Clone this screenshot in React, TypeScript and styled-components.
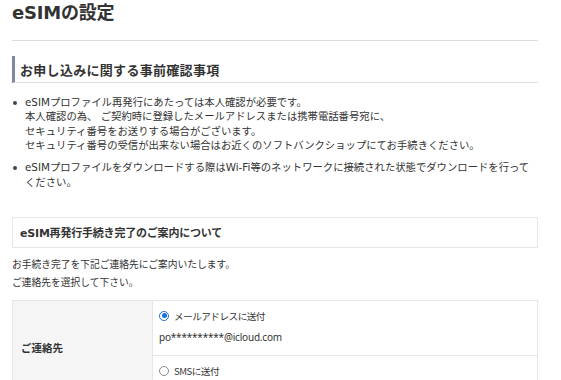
import React from "react";
import styled, { createGlobalStyle } from "styled-components";

const GlobalStyle = createGlobalStyle`
  body {
    margin: 0;
    background: #fff;
    color: #333;
    font-family: "DejaVu Sans", "Noto Sans CJK JP", sans-serif;
  }
`;

const Page = styled.div`
  width: 526px;
  padding: 0 12px;
`;

const Title = styled.h1`
  margin: 0;
  font-size: 18px;
  line-height: 26px;
  font-weight: bold;
  color: #333;
  letter-spacing: -0.2px;
`;

const Rule = styled.hr`
  margin: 14px 0 0;
  border: 0;
  border-top: 1px solid #dcdcdc;
`;

const SectionHead = styled.h2`
  margin: 15px 0 0;
  height: 26px;
  display: flex;
  align-items: center;
  padding-left: 5px;
  border-left: 3px solid #7f8a9e;
  border-bottom: 1px solid #dedede;
  font-family: "Noto Sans CJK JP", sans-serif;
  font-size: 13px;
  font-weight: bold;
  letter-spacing: 0.3px;
`;

const Bullets = styled.ul`
  margin: 12px 0 0;
  padding: 0;
  list-style: none;
`;

const Bullet = styled.li`
  position: relative;
  padding-left: 13px;
  font-size: 10.35px;
  line-height: 14.4px;
  & + & {
    margin-top: 7.5px;
  }
  &::before {
    content: "";
    position: absolute;
    left: 1px;
    top: 5.5px;
    width: 4px;
    height: 4px;
    border-radius: 50%;
    background: #444;
  }
`;

const InfoBox = styled.div`
  margin-top: 28px;
  height: 29px;
  display: flex;
  align-items: center;
  padding-left: 7px;
  border: 1px solid #e6e6e6;
  font-size: 11px;
  font-weight: bold;
  letter-spacing: -0.2px;
`;

const Note = styled.p`
  margin: 8px 0 0;
  font-size: 9.75px;
  line-height: 18px;
`;

const Table = styled.div`
  margin-top: 8px;
  display: grid;
  grid-template-columns: 140px 1fr;
  border: 1px solid #e6e6e6;
  border-bottom: 0;
`;

const LabelCell = styled.div`
  background: #f5f5f5;
  display: flex;
  align-items: center;
  padding-left: 8px;
  font-size: 10.5px;
  font-weight: bold;
  border-right: 1px solid #e6e6e6;
`;

const OptionCell = styled.div<{ $h: number }>`
  padding: 7px 6px 0;
  height: ${(p) => p.$h}px;
  box-sizing: border-box;
  font-family: "Noto Sans CJK JP", sans-serif;
  font-size: 9.6px;
  & + & {
    border-top: 1px solid #e6e6e6;
  }
`;

const OptionRow = styled.label`
  display: flex;
  align-items: center;
  gap: 5px;
  height: 16px;
  letter-spacing: -0.5px;
`;

const Radio = styled.span<{ $on?: boolean }>`
  width: 10px;
  height: 10px;
  border-radius: 50%;
  box-sizing: border-box;
  border: ${(p) => (p.$on ? "1.5px solid #1a6fe0" : "1.2px solid #8a8a8a")};
  display: flex;
  align-items: center;
  justify-content: center;
  &::after {
    content: "";
    width: 5px;
    height: 5px;
    border-radius: 50%;
    background: ${(p) => (p.$on ? "#1a6fe0" : "transparent")};
  }
`;

const Address = styled.div`
  margin-top: 5px;
  line-height: 16px;
  font-family: "Noto Sans", "Noto Sans CJK JP", sans-serif;
  font-size: 10px;
  letter-spacing: -0.2px;
`;

export default function App() {
  return (
    <Page>
      <GlobalStyle />
      <Title>eSIMの設定</Title>
      <Rule />
      <SectionHead>お申し込みに関する事前確認事項</SectionHead>
      <Bullets>
        <Bullet>
          eSIMプロファイル再発行にあたっては本人確認が必要です。
          <br />
          本人確認の為、 ご契約時に登録したメールアドレスまたは携帯電話番号宛に、
          <br />
          セキュリティ番号をお送りする場合がございます。
          <br />
          セキュリティ番号の受信が出来ない場合はお近くのソフトバンクショップにてお手続きください。
        </Bullet>
        <Bullet>
          eSIMプロファイルをダウンロードする際はWi-Fi等のネットワークに接続された状態でダウンロードを行って
          <br />
          ください。
        </Bullet>
      </Bullets>
      <InfoBox>eSIM再発行手続き完了のご案内について</InfoBox>
      <Note>
        お手続き完了を下記ご連絡先にご案内いたします。
        <br />
        ご連絡先を選択して下さい。
      </Note>
      <Table>
        <LabelCell>ご連絡先</LabelCell>
        <div>
          <OptionCell $h={54}>
            <OptionRow>
              <Radio $on />
              メールアドレスに送付
            </OptionRow>
            <Address>po**********@icloud.com</Address>
          </OptionCell>
          <OptionCell $h={40}>
            <OptionRow>
              <Radio />
              SMSに送付
            </OptionRow>
          </OptionCell>
        </div>
      </Table>
    </Page>
  );
}
